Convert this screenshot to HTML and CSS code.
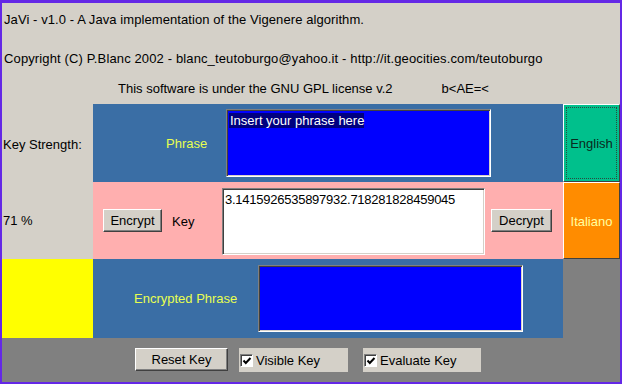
FILE: index.html
```html
<!DOCTYPE html>
<html>
<head>
<meta charset="utf-8">
<link rel="stylesheet" href="styles.css">
</head>
<body>
<div class="window">
  <div class="header">
    <div class="line l1">JaVi - v1.0 - A Java implementation of the Vigenere algorithm.</div>
    <div class="line l2">Copyright (C) P.Blanc 2002 - blanc_teutoburgo@yahoo.it - http://it.geocities.com/teutoburgo</div>
    <div class="line l3"><span>This software is under the GNU GPL license v.2</span><span class="code">b&lt;AE=&lt;</span></div>
  </div>
  <div class="grid">
    <div class="cell side"><span class="side-text t1">Key Strength:</span></div>
    <div class="cell blue row">
      <div class="label lbl-phrase">Phrase</div>
      <div class="area area-blue area-phrase"><span class="sel">Insert your phrase here</span></div>
    </div>
    <div class="cell lang english"><span class="focus">English</span></div>

    <div class="cell side"><span class="side-text t2">71 %</span></div>
    <div class="cell pink row">
      <div class="btn btn-encrypt">Encrypt</div>
      <div class="label-dark lbl-key">Key</div>
      <div class="area area-white area-key">3.1415926535897932.718281828459045</div>
      <div class="btn btn-decrypt">Decrypt</div>
    </div>
    <div class="cell lang italiano">Italiano</div>

    <div class="cell yellow"></div>
    <div class="cell blue row">
      <div class="label lbl-enc">Encrypted Phrase</div>
      <div class="area area-blue area-enc"></div>
    </div>
    <div class="cell dark"></div>
  </div>
  <div class="bottom">
    <div class="btn btn-reset">Reset Key</div>
    <div class="check check-visible">
      <span class="box"><svg width="10" height="10" viewBox="0 0 10 10"><polyline points="1.5,4.5 3.8,7 8.5,2" fill="none" stroke="#000" stroke-width="2"/></svg></span>
      <span>Visible Key</span>
    </div>
    <div class="check check-eval">
      <span class="box"><svg width="10" height="10" viewBox="0 0 10 10"><polyline points="1.5,4.5 3.8,7 8.5,2" fill="none" stroke="#000" stroke-width="2"/></svg></span>
      <span>Evaluate Key</span>
    </div>
  </div>
</div>
</body>
</html>
```

FILE: styles.css
```css
html, body {
  margin: 0;
  padding: 0;
}
body {
  font-family: "Liberation Sans", Arial, sans-serif;
  font-size: 13px;
  line-height: 15px;
  color: #000;
}
.window {
  width: 622px;
  height: 384px;
  box-sizing: border-box;
  border-style: solid;
  border-color: #6428e6;
  border-width: 3px 2px 2px 2px;
  background: #d4d0c8;
  display: flex;
  flex-direction: column;
  overflow: hidden;
}
.header {
  height: 101px;
  box-sizing: border-box;
  padding-top: 9px;
  flex: none;
}
.line {
  white-space: nowrap;
  padding-left: 2px;
}
.l1 { letter-spacing: 0.08px; }
.l2 { margin-top: 24px; letter-spacing: 0.13px; }
.l3 { margin-top: 15px; padding-left: 116px; }
.code { margin-left: 49px; }

.grid {
  display: grid;
  grid-template-columns: 91px 470px 57px;
  grid-template-rows: 78px 77px 79px;
  flex: none;
}
.cell { box-sizing: border-box; }
.side { padding-left: 1px; }
.side-text { display: block; white-space: nowrap; }
.t1 { padding-top: 33px; }
.t2 { padding-top: 31px; }
.row {
  display: flex;
  align-items: flex-start;
}
.blue { background: #3a6ea5; }
.pink { background: #ffafaf; }
.yellow { background: #ffff00; }
.dark { background: #808080; }

.label {
  color: #e8ff50;
  white-space: nowrap;
  box-sizing: border-box;
  flex: none;
}
.lbl-phrase { width: 133px; padding-left: 73px; margin-top: 32px; }
.lbl-enc { width: 165px; padding-left: 41px; margin-top: 32px; }

.area {
  box-sizing: border-box;
  flex: none;
  border: 1px solid;
  border-color: #808080 #ffffff #ffffff #808080;
  box-shadow: inset 1px 1px 0 #404040, inset -1px -1px 0 #d4d0c8;
  padding: 3px 2px;
  white-space: nowrap;
}
.area-blue { background: #0000ff; }
.area-white { background: #ffffff; }
.area-phrase { width: 265px; height: 68px; margin-top: 5px; }
.area-enc { width: 265px; height: 67px; margin-top: 6px; }
.area-key { width: 263px; height: 67px; margin-top: 6px; letter-spacing: -0.25px; }
.sel {
  background: #000080;
  color: #ffffff;
  display: inline-block;
  padding-left: 1px;
}

.btn {
  box-sizing: border-box;
  flex: none;
  height: 23px;
  background: #d4d0c8;
  border: 1px solid;
  border-color: #ffffff #404040 #404040 #ffffff;
  box-shadow: inset -1px -1px 0 #808080;
  display: flex;
  align-items: center;
  justify-content: center;
  white-space: nowrap;
}
.btn-encrypt { width: 59px; margin-left: 10px; margin-top: 27px; }
.label-dark {
  flex: none;
  box-sizing: border-box;
  width: 50px;
  margin-left: 10px;
  margin-top: 32px;
}
.btn-decrypt { width: 61px; margin-left: 6px; margin-top: 27px; }

.lang {
  border: 1px solid;
  border-color: #ffffff #404040 #404040 #ffffff;
  display: flex;
  align-items: center;
  justify-content: center;
  padding-top: 1px;
}
.english {
  background: #00c08c;
  color: #0a2a20;
  padding: 2px;
}
.focus {
  display: flex;
  align-items: center;
  justify-content: center;
  width: 100%;
  height: 100%;
  box-sizing: border-box;
  border: 1px dotted #2a4a40;
  padding-top: 1px;
}
.italiano {
  background: #ff8c00;
  color: #ffffa0;
}

.bottom {
  flex: 1;
  background: #808080;
  display: flex;
  align-items: flex-start;
  padding-left: 133px;
  padding-top: 10px;
  box-sizing: border-box;
}
.btn-reset { width: 93px; }
.check {
  box-sizing: border-box;
  height: 24px;
  background: #d4d0c8;
  display: flex;
  align-items: center;
  white-space: nowrap;
  flex: none;
}
.check-visible { width: 109px; margin-left: 11px; }
.check-eval { width: 118px; margin-left: 15px; }
.box {
  box-sizing: border-box;
  width: 13px;
  height: 13px;
  margin-left: 1px;
  margin-right: 3px;
  background: #ffffff;
  border: 1px solid;
  border-color: #808080 #ffffff #ffffff #808080;
  box-shadow: inset 1px 1px 0 #404040;
  display: flex;
  align-items: center;
  justify-content: center;
  padding: 1px 0 0 1px;
}
.box svg { display: block; }
```
